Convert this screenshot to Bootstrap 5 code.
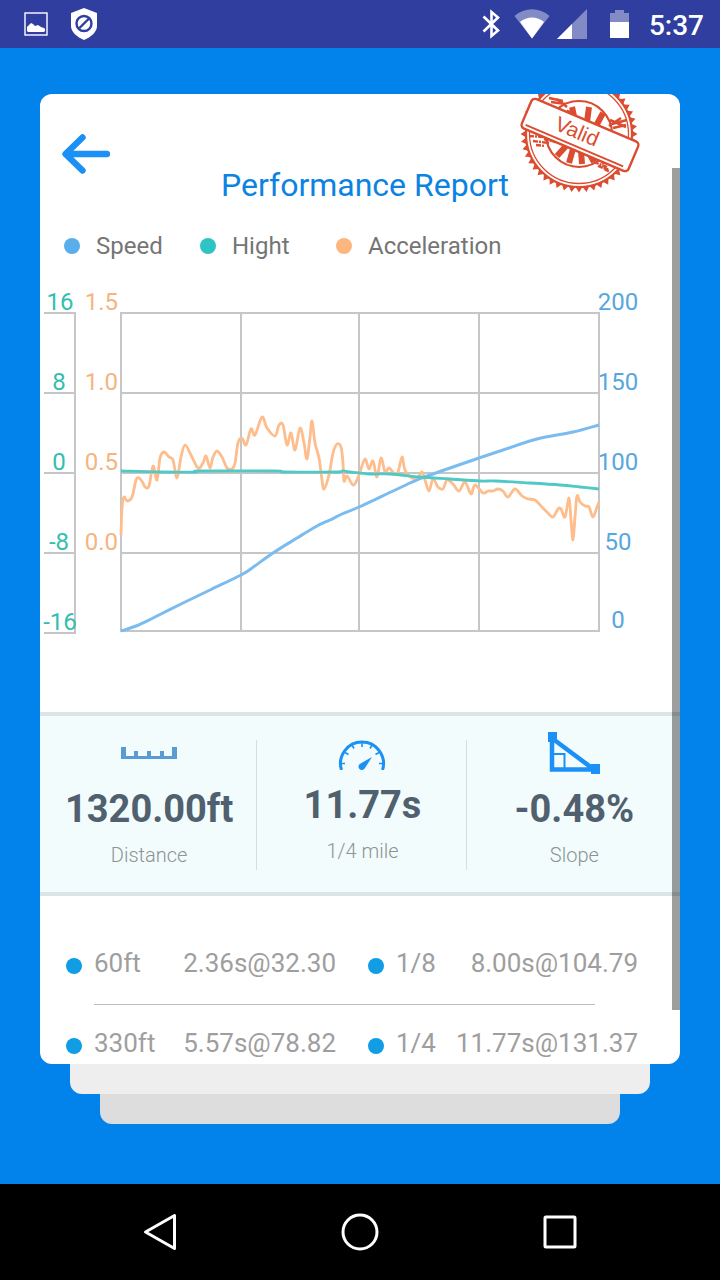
<!DOCTYPE html>
<html lang="en">
<head>
<meta charset="utf-8">
<meta name="viewport" content="width=device-width, initial-scale=1">
<title>Performance Report</title>
<link href="https://cdn.jsdelivr.net/npm/bootstrap@5.3.0/dist/css/bootstrap.min.css" rel="stylesheet">
<style>
  body { font-family: Roboto, "Noto Sans", sans-serif; background: #0283ec; }
  .status-bar { height: 48px; background: #303f9f; padding: 0 16px 0 24px; gap: 22px; }
  .clock { font-size: 28px; line-height: 48px; font-weight: 500; padding-top: 3px; margin-left: -3px; }
  .stage { padding: 46px 40px 60px; }
  .report { border-radius: 12px; z-index: 2; }
  .sheet { height: 30px; border-radius: 0 0 12px 12px; }
  .sheet-near { margin: 0 30px; background: #eee; }
  .sheet-far { margin: 0 60px; background: #ddd; }
  .report-head { height: 110px; padding: 40px 60px 0 22px; }
  .report-title { font-size: 32px; line-height: 38px; color: #0b83e2; }
  .stamp { top: 0; right: 36px; }
  .scroll-thumb { top: 74px; bottom: 54px; right: 0; width: 8px; background: rgba(0, 0, 0, .38); }
  .legend-row { margin: 26px 24px 18px; font-size: 24px; line-height: 32px; color: #757575; }
  .legend-item { min-width: 136px; gap: 16px; }
  .dot { width: 16px; height: 16px; border-radius: 50%; flex: none; }
  .dot-speed { background: #5aaeec; }
  .dot-height { background: #2ec4c6; }
  .dot-accel { background: #fdb77e; }
  .dot-split { background: #109de4; margin-top: 6px; }
  .chart { margin-bottom: 62px; }
  .chart text { font-size: 24px; }
  .stats { background: #f3fcfd; border-top: 4px solid #d9e4e6; border-bottom: 4px solid #d9e4e6; height: 184px; }
  .stat { padding: 16px 0 0 2px; flex: 214 1 0; }
  .stat:first-child { flex-grow: 217; }
  .stat-mid { flex-grow: 209; }
  .stat-rule { width: 1px; background: #d5dfe1; margin: 24px 0 22px; }
  .stat-value { font-size: 38px; line-height: 50px; font-weight: 700; color: #50606f; margin-top: 10px; }
  .stat-label { font-size: 20px; line-height: 24px; font-weight: 300; color: #8b9394; margin-top: 9px; }
  .splits { padding: 47px 42px 0 26px; font-size: 26px; line-height: 40px; color: #9e9e9e; }
  .splits-row { gap: 32px; }
  .split { flex: 1 1 0; }
  .split-name { margin-left: 12px; }
  .splits-rule { margin: 21px 43px 18px 28px; border-top: 1px solid #bdbdbd; opacity: 1; }
  .nav-keys { height: 96px; padding: 0 60px; }
</style>
</head>
<body class="d-flex flex-column min-vh-100">

<header class="status-bar d-flex align-items-center text-white">
  <svg width="24" height="24" viewBox="0 0 24 24" aria-hidden="true">
    <rect x="1" y="1" width="22" height="22" fill="none" stroke="#fff" stroke-width="1.4"/>
    <path d="M3 19v-4l2-2 2-2 2 1 2 2 3-1 3 2 3 1 1 1v2l-1 1H4z" fill="#fff"/>
  </svg>
  <svg class="me-auto" width="28" height="34" viewBox="0 0 28 34" aria-hidden="true">
    <path d="M14 1 27 6v13c0 6-6 11-13 14C7 30 1 25 1 19V6z" fill="#fff"/>
    <circle cx="14" cy="16.500" r="7.500" fill="none" stroke="#303f9f" stroke-width="2.400"/>
    <path d="M9.500 21 19 11.500" stroke="#303f9f" stroke-width="2.400"/>
  </svg>
  <svg width="150" height="34" viewBox="480 7 150 34" aria-hidden="true">
    <path d="M483.500 16.500 498 30.500 491.500 36V12l6.500 5.500L483.500 31.500" fill="none" stroke="#fff" stroke-width="2.600"/>
    <path d="M514.500 16c10-9 25-9 35 0L532 38.500z" fill="#fff" opacity=".4"/>
    <path d="M520 22c7-6 17-6 24 0L532 38.500z" fill="#fff"/>
    <path d="M557 39h30V9z" fill="#fff" opacity=".4"/>
    <path d="M557 39h15V24z" fill="#fff"/>
    <path d="M610 22V13h5v-3h9v3h5v9z" fill="#fff" opacity=".4"/>
    <path d="M610 22h19v16h-19z" fill="#fff"/>
  </svg>
  <span class="clock">5:37</span>
</header>

<main class="stage flex-grow-1 d-flex flex-column">
  <section class="report bg-white flex-grow-1 position-relative overflow-hidden">
    <div class="report-head d-flex">
      <button type="button" class="btn p-0 border-0 align-self-start d-flex" aria-label="Back">
        <svg width="48" height="40" viewBox="0 0 48 40"><path d="M20.500 3.500 3.500 20l17 16.500M4 20h41" fill="none" stroke="#1b90f6" stroke-width="6.400" stroke-linecap="round" stroke-linejoin="round"/></svg>
      </button>
      <h1 class="report-title flex-grow-1 text-center align-self-end fw-normal m-0">Performance Report</h1>
    </div>

    <div class="legend-row d-flex">
      <div class="legend-item d-flex align-items-center"><span class="dot dot-speed"></span>Speed</div>
      <div class="legend-item d-flex align-items-center"><span class="dot dot-height"></span>Hight</div>
      <div class="legend-item d-flex align-items-center"><span class="dot dot-accel"></span>Acceleration</div>
    </div>

    <svg class="chart d-block w-100" viewBox="40 280 640 370" role="img" aria-label="Speed, height and acceleration over the run">
      <g fill="none" stroke="#c6c6c6" stroke-width="2">
        <path d="M44 313H75V633H44M44 393H75M44 473H75M44 553H75"/>
        <path d="M121 313H599V631H121zM121 393H599M121 473H599M121 553H599M241 313V631M359 313V631M479 313V631"/>
      </g>
      <g fill="none" stroke-linejoin="round" stroke-linecap="butt">
        <path id="accel" stroke="#fdbd8c" stroke-width="2.800"/>
        <path id="speed" stroke="#7abcf0" stroke-width="3"/>
        <path id="height" stroke="#50c9c6" stroke-width="2.800"/>
      </g>
      <g fill="#35bdb2" text-anchor="middle">
        <text x="60" y="310">16</text><text x="59" y="390">8</text><text x="59" y="470">0</text><text x="59" y="550">-8</text><text x="60" y="630">-16</text>
      </g>
      <g fill="#f5b480" text-anchor="end">
        <text x="118" y="310">1.5</text><text x="118" y="390">1.0</text><text x="118" y="470">0.5</text><text x="118" y="550">0.0</text>
      </g>
      <g fill="#58a6df" text-anchor="middle">
        <text x="618" y="310">200</text><text x="618" y="390">150</text><text x="618" y="470">100</text><text x="618" y="550">50</text><text x="618" y="628">0</text>
      </g>
    </svg>

    <div class="stats d-flex text-center">
      <div class="stat">
        <svg class="d-block mx-auto" width="56" height="42" viewBox="0 0 56 42" aria-hidden="true"><path d="M0 15h5v9h8v-5h4v5h9v-5h4v5h9v-5h4v5h8v-9h5v12H0z" fill="#5b9bd5"/></svg>
        <div class="stat-value">1320.00ft</div>
        <div class="stat-label">Distance</div>
      </div>
      <div class="stat-rule"></div>
      <div class="stat stat-mid">
        <svg class="d-block mx-auto" width="48" height="38" viewBox="339 732 48 38" aria-hidden="true">
          <path d="M342.500 770A21.500 21.500 0 1 1 383.500 770" fill="none" stroke="#1b90f6" stroke-width="3"/>
          <path d="M363 742v5M353 745l2 3.500M373 745l-2 3.500M346 752.500l3.500 2M380 752.500l-3.500 2M342 763.500h4M384 763.500h-4" stroke="#1b90f6" stroke-width="1.600"/>
          <path d="M373 757 366 768a3.400 3.400 0 1 1-4.500-4.500z" fill="#1b90f6"/>
        </svg>
        <div class="stat-value">11.77s</div>
        <div class="stat-label">1/4 mile</div>
      </div>
      <div class="stat-rule"></div>
      <div class="stat">
        <svg class="d-block mx-auto" width="52" height="42" viewBox="0 0 52 42" aria-hidden="true">
          <path d="M5 22h11.500v15" fill="none" stroke="#1b90f6" stroke-width="2"/>
          <path d="M4 4v33.500h42L5 7" fill="none" stroke="#1b90f6" stroke-width="4.500"/>
          <path d="M0 0h9v10H0zM43 32h9v10h-9z" fill="#1b90f6"/>
        </svg>
        <div class="stat-value">-0.48%</div>
        <div class="stat-label">Slope</div>
      </div>
    </div>

    <div class="splits">
      <div class="splits-row d-flex">
        <div class="split d-flex align-items-center"><span class="dot dot-split"></span><span class="split-name">60ft</span><span class="ms-auto">2.36s@32.30</span></div>
        <div class="split d-flex align-items-center"><span class="dot dot-split"></span><span class="split-name">1/8</span><span class="ms-auto">8.00s@104.79</span></div>
      </div>
      <hr class="splits-rule">
      <div class="splits-row d-flex">
        <div class="split d-flex align-items-center"><span class="dot dot-split"></span><span class="split-name">330ft</span><span class="ms-auto">5.57s@78.82</span></div>
        <div class="split d-flex align-items-center"><span class="dot dot-split"></span><span class="split-name">1/4</span><span class="ms-auto">11.77s@131.37</span></div>
      </div>
    </div>

    <!-- Rubber stamp hanging over the top edge of the sheet -->
    <svg class="stamp position-absolute" width="128" height="104" viewBox="516 94 128 104">
      <path id="teeth" fill="#db4c30"/>
      <g fill="none" stroke="#db4c30">
        <circle cx="579" cy="134" r="53" fill="#fff" stroke-width="2.200"/>
        <circle cx="579" cy="134" r="49.500" stroke-width="1.300"/>
        <circle cx="579" cy="134" r="33" stroke-width="2.200"/>
        <path d="M575 121l-3-14M587 122l2-15M596 126l7-13M566 112l9 5M566 146l-9 10M573 149l-4 14M581 151l1 13M589 153l5 9" stroke-width="6"/>
        <path d="M549 98l14 3M551 102l15 2M557 99l10 8M612 124l15-4M610 120l16 7M613 128l13-3M609 126l12-8" stroke-width="2.600"/>
        <path d="M529 136l15 1M533 141l16 2M536 145l9 1M544 139l11 3M594 162l13 5M598 166l8 3M602 160l4 11M607 168l1 4" stroke-width="2.400" stroke-dasharray="5 1 2 1"/>
      </g>
      <g transform="rotate(23 580 135)">
        <rect x="522" y="119" width="116" height="32" rx="4" fill="#fff" stroke="#db4c30" stroke-width="2.400"/>
        <path d="M526 147H632" stroke="#db4c30" stroke-width="1.800"/>
        <text x="576" y="140" font-size="21" text-anchor="middle" font-family="'Liberation Sans', sans-serif" fill="#db4c30">Valid</text>
      </g>
    </svg>
    <div class="scroll-thumb position-absolute"></div>
  </section>
  <div class="sheet sheet-near"></div>
  <div class="sheet sheet-far"></div>
</main>

<nav class="nav-keys bg-black d-flex" aria-label="System">
  <button type="button" class="btn border-0 flex-fill p-0" aria-label="Go back"><svg width="40" height="40" viewBox="0 0 40 40"><path d="M5.500 20 34.500 3.500v33z" fill="none" stroke="#fff" stroke-width="3" stroke-linejoin="round"/></svg></button>
  <button type="button" class="btn border-0 flex-fill p-0" aria-label="Home"><svg width="40" height="40" viewBox="0 0 40 40"><circle cx="20" cy="20" r="17" fill="none" stroke="#fff" stroke-width="3"/></svg></button>
  <button type="button" class="btn border-0 flex-fill p-0" aria-label="Recent apps"><svg width="40" height="40" viewBox="0 0 40 40"><rect x="5" y="5" width="30" height="30" rx="1" fill="none" stroke="#fff" stroke-width="3"/></svg></button>
</nav>

<script src="https://cdn.jsdelivr.net/npm/bootstrap@5.3.0/dist/js/bootstrap.bundle.min.js"></script>
<script>
  // Each series is a flat list of x,y pairs in chart units.
  const series = {
    accel: [121,535,122,508,124,497,127,501,132,497,136,480,139,478,143,483,145,487,149,486,153,466,157,480,160,458,164,452,169,457,173,460,177,478,181,457,185,445,191,455,198,468,203,463,206,456,210,468,213,457,217,451,222,457,227,468,232,469,235,463,238,443,242,438,246,445,251,429,255,435,262,417,267,428,275,436,279,425,283,425,287,445,291,433,295,450,300,428,304,443,307,459,310,437,312,421,315,443,319,458,322,480,324,489,329,475,333,453,337,444,341,447,343,463,344,481,347,476,353,485,357,480,360,472,365,459,369,469,373,461,377,477,381,458,385,472,389,468,394,473,398,472,402,457,405,470,412,478,418,477,422,472,425,480,429,491,433,479,438,487,443,489,447,480,453,484,459,491,465,482,471,494,475,485,483,493,488,491,493,491,498,489,503,491,508,497,515,489,522,496,528,499,535,500,542,507,548,513,553,517,558,509,561,509,565,517,569,498,571,520,573,540,575,517,577,496,580,502,585,506,589,507,593,517,597,507,599,502],
    speed: [121,631,136,626,153,618,183,603,210,590,241,575,252,568,273,553,297,538,317,526,330,520,342,514,359,507,410,483,430,475,479,458,503,450,537,439,573,432,599,425],
    height: [121,471,160,472,195,472,200,471,275,471,285,472,335,472,343,471,350,472,370,474,390,474,420,477,450,479,480,481,495,481,530,483,560,485,580,487,599,489]
  };
  for (const [id, v] of Object.entries(series)) {
    const p = [];
    for (let i = 0; i < v.length; i += 2) p.push([v[i], v[i + 1]]);
    let d = `M${p[0]}`;
    for (let i = 0; i < p.length - 1; i++) {
      const a = p[i - 1] || p[i], b = p[i], c = p[i + 1], e = p[i + 2] || c;
      d += `C${b[0] + (c[0] - a[0]) / 6},${b[1] + (c[1] - a[1]) / 6} ${c[0] - (e[0] - b[0]) / 6},${c[1] - (e[1] - b[1]) / 6} ${c}`;
    }
    document.getElementById(id).setAttribute('d', d);
  }

  // Serrated rim of the stamp: radius alternates between tooth tip and root.
  const rim = [];
  for (let i = 0; i < 96; i++) {
    const r = i % 2 ? 53 : 58.5, t = i * Math.PI / 48;
    rim.push([579 + r * Math.cos(t), 134 + r * Math.sin(t)]);
  }
  document.getElementById('teeth').setAttribute('d', `M${rim.join('L')}Z`);
</script>
</body>
</html>
